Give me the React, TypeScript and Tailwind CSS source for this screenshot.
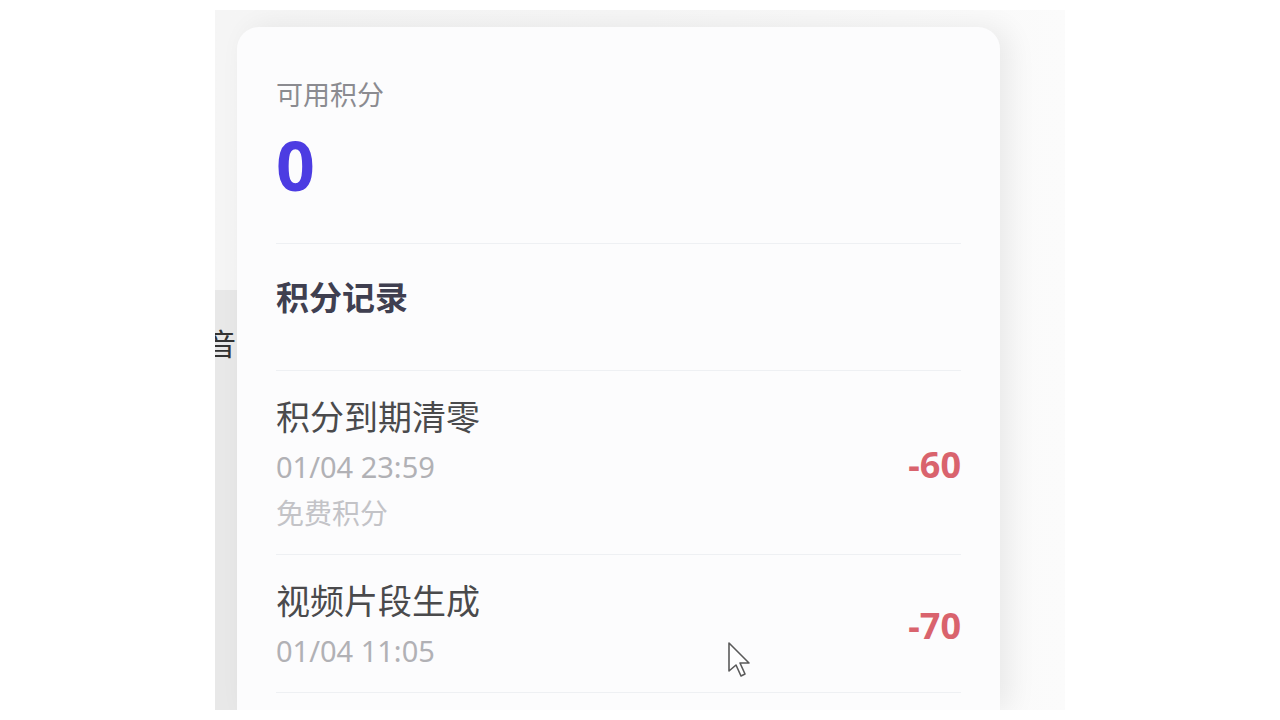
type PointRecord = {
  title: string;
  time: string;
  tag?: string;
  amount: number;
};

const records: PointRecord[] = [
  { title: '积分到期清零', time: '01/04 23:59', tag: '免费积分', amount: -60 },
  { title: '视频片段生成', time: '01/04 11:05', amount: -70 },
];

const cjk = "font-['Noto_Sans','Noto_Sans_CJK_SC',sans-serif]";

const RecordRow = ({ record }: { record: PointRecord }) => {
  return (
    <div className="flex items-center justify-between border-b border-[#eef0f3] pt-[24px] pb-[21px]">
      <div className="flex flex-col">
        <span className="text-[34px] leading-[44px] text-[#4a4a4c]">{record.title}</span>
        <span className="mt-[8px] text-[29px] leading-[40px] text-[#b1b1b5]">{record.time}</span>
        {record.tag && (
          <span className="mt-[6px] text-[28px] leading-[40px] text-[#c3c3c7]">{record.tag}</span>
        )}
      </div>
      <span className="mt-[2px] text-[36px] font-bold leading-[44px] text-[#d9636d]">{record.amount}</span>
    </div>
  );
};

const Cursor = () => (
  <svg
    className="absolute left-[726px] top-[640px]"
    width="28"
    height="40"
    viewBox="0 0 28 40"
    fill="none"
  >
    <path
      d="M3 3 L3 31 L10 25 L15 36 L19 34 L14 23 L23 23 Z"
      fill="#ffffff"
      stroke="#5a5a5a"
      strokeWidth="1.6"
      strokeLinejoin="round"
    />
  </svg>
);

export default function App() {
  return (
    <div className={`relative h-[720px] w-full overflow-hidden bg-white pl-[215px] pt-[10px] ${cjk}`}>
      <div className="flex h-[700px] w-[850px] overflow-hidden bg-gradient-to-r from-[#f5f5f5] via-[#f6f6f6] to-[#fbfbfb]">
        {/* side panel peeking out behind the card */}
        <div className="flex w-[22px] flex-col pt-[280px]">
          <div className="flex-1 overflow-hidden bg-[#e8e8e8] pt-[36px]">
            <span className="-ml-[9px] block whitespace-nowrap text-[30px] leading-[36px] text-[#333]">音</span>
          </div>
        </div>

        <div className="mt-[17px] w-[763px] rounded-t-[22px] bg-[#fcfcfd] px-[39px] pt-[52px] shadow-[10px_0_28px_rgba(0,0,0,0.07)]">
          <div className="border-b border-[#eef0f3] pb-[44px]">
            <div className="text-[27px] leading-[32px] text-[#8b8b90]">可用积分</div>
            <div className="mt-[20px] text-[68px] font-bold leading-[68px] text-[#4c3ce2]">0</div>
          </div>

          <div className="border-b border-[#eef0f3] pt-[34px] pb-[52px]">
            <h2 className="text-[33px] font-bold leading-[40px] text-[#3f3f50]">积分记录</h2>
          </div>

          {records.map((r) => (
            <RecordRow key={r.title} record={r} />
          ))}
        </div>
      </div>
      <Cursor />
    </div>
  );
}
